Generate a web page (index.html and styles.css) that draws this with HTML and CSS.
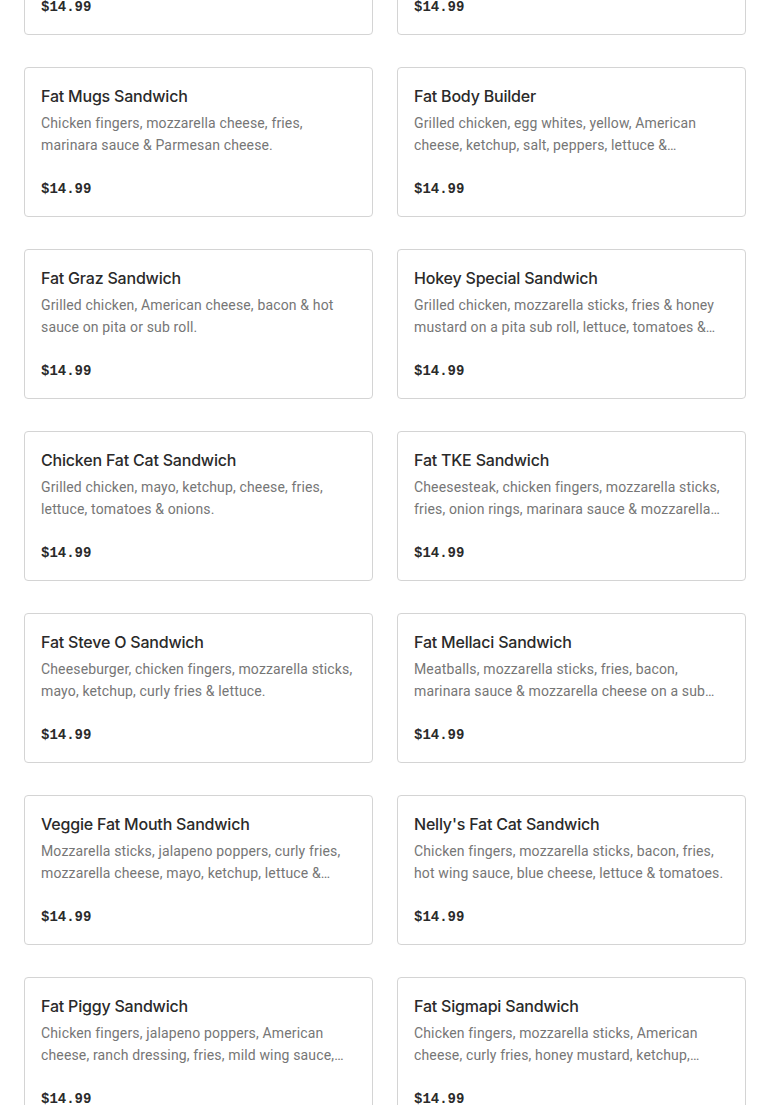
FILE: index.html
```html
<!DOCTYPE html>
<html lang="en">
<head>
<meta charset="utf-8">
<title>Menu</title>
<link rel="stylesheet" href="styles.css">
</head>
<body>
<main class="menu">
  <div class="card"><h3 class="name">Fat Cat Sandwich</h3><p class="desc">Cheesesteak, chicken fingers, mozzarella sticks, fries &amp; marinara sauce.</p><div class="price">$14.99</div></div>
  <div class="card"><h3 class="name">Fat Smack Sandwich</h3><p class="desc">Chicken fingers, bacon, mozzarella sticks, fries &amp; ranch dressing.</p><div class="price">$14.99</div></div>

  <div class="card"><h3 class="name">Fat Mugs Sandwich</h3><p class="desc">Chicken fingers, mozzarella cheese, fries, marinara sauce &amp; Parmesan cheese.</p><div class="price">$14.99</div></div>
  <div class="card"><h3 class="name">Fat Body Builder</h3><p class="desc">Grilled chicken, egg whites, yellow, American cheese, ketchup, salt, peppers, lettuce &amp; tomatoes on a pita sub roll.</p><div class="price">$14.99</div></div>

  <div class="card"><h3 class="name">Fat Graz Sandwich</h3><p class="desc">Grilled chicken, American cheese, bacon &amp; hot sauce on pita or sub roll.</p><div class="price">$14.99</div></div>
  <div class="card"><h3 class="name">Hokey Special Sandwich</h3><p class="desc">Grilled chicken, mozzarella sticks, fries &amp; honey mustard on a pita sub roll, lettuce, tomatoes &amp; onions.</p><div class="price">$14.99</div></div>

  <div class="card"><h3 class="name">Chicken Fat Cat Sandwich</h3><p class="desc">Grilled chicken, mayo, ketchup, cheese, fries, lettuce, tomatoes &amp; onions.</p><div class="price">$14.99</div></div>
  <div class="card"><h3 class="name">Fat TKE Sandwich</h3><p class="desc">Cheesesteak, chicken fingers, mozzarella sticks, fries, onion rings, marinara sauce &amp; mozzarella cheese.</p><div class="price">$14.99</div></div>

  <div class="card"><h3 class="name">Fat Steve O Sandwich</h3><p class="desc">Cheeseburger, chicken fingers, mozzarella sticks, mayo, ketchup, curly fries &amp; lettuce.</p><div class="price">$14.99</div></div>
  <div class="card"><h3 class="name">Fat Mellaci Sandwich</h3><p class="desc">Meatballs, mozzarella sticks, fries, bacon, marinara sauce &amp; mozzarella cheese on a sub roll.</p><div class="price">$14.99</div></div>

  <div class="card"><h3 class="name">Veggie Fat Mouth Sandwich</h3><p class="desc">Mozzarella sticks, jalapeno poppers, curly fries, mozzarella cheese, mayo, ketchup, lettuce &amp; tomatoes.</p><div class="price">$14.99</div></div>
  <div class="card"><h3 class="name">Nelly's Fat Cat Sandwich</h3><p class="desc">Chicken fingers, mozzarella sticks, bacon, fries, hot wing sauce, blue cheese, lettuce &amp; tomatoes.</p><div class="price">$14.99</div></div>

  <div class="card"><h3 class="name">Fat Piggy Sandwich</h3><p class="desc">Chicken fingers, jalapeno poppers, American cheese, ranch dressing, fries, mild wing sauce, lettuce &amp; tomatoes.</p><div class="price">$14.99</div></div>
  <div class="card"><h3 class="name">Fat Sigmapi Sandwich</h3><p class="desc">Chicken fingers, mozzarella sticks, American cheese, curly fries, honey mustard, ketchup, lettuce &amp; tomatoes.</p><div class="price">$14.99</div></div>
</main>
</body>
</html>
```

FILE: styles.css
```css
html, body {
  margin: 0;
  padding: 0;
  background: #ffffff;
}

body {
  font-family: Inter, "Noto Sans", "Liberation Sans", sans-serif;
  color: #2a2a2a;
  overflow: hidden;
}

.menu {
  display: grid;
  grid-template-columns: 349px 349px;
  column-gap: 24px;
  row-gap: 32px;
  padding: 0 24px;
  margin-top: -115px;
}

.card {
  box-sizing: border-box;
  height: 150px;
  border: 1px solid #d4d4d4;
  border-radius: 4px;
  padding: 16px;
  display: flex;
  flex-direction: column;
}

.name {
  margin: 0;
  font-size: 16px;
  line-height: 24px;
  font-weight: 500;
  color: #2a2a2a;
  letter-spacing: -0.2px;
}

.desc {
  margin: 4px 0 0;
  font-family: Roboto, "Liberation Sans", sans-serif;
  font-size: 14px;
  line-height: 22px;
  height: 44px;
  color: #767676;
  letter-spacing: 0.15px;
  display: -webkit-box;
  -webkit-line-clamp: 2;
  -webkit-box-orient: vertical;
  overflow: hidden;
}

.price {
  margin-top: 22px;
  font-family: "Liberation Mono", "DejaVu Sans Mono", monospace;
  font-weight: 700;
  font-size: 14px;
  line-height: 22px;
  color: #2a2a2a;
}
```
